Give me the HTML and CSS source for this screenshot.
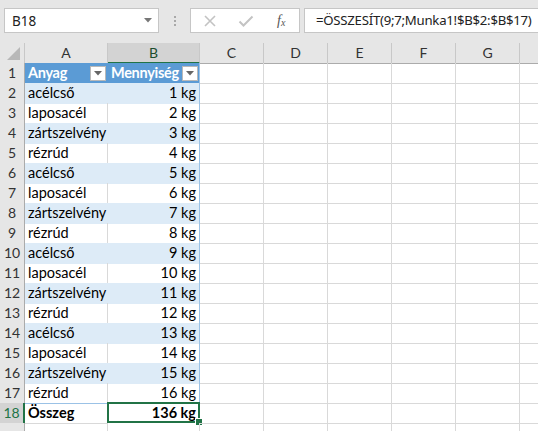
FILE: index.html
```html
<!DOCTYPE html>
<html lang="hu">
<head>
<meta charset="utf-8">
<title>Munka1</title>
<link rel="stylesheet" href="styles.css">
</head>
<body>
<div class="toolbar">
  <div class="namebox">
    <span class="nb-text">B18</span>
    <svg class="nb-arrow" width="8" height="5" viewBox="0 0 8 5"><path d="M0 0H8L4 4.5Z" fill="#777"/></svg>
  </div>
  <div class="dots"><i></i><i></i><i></i></div>
  <div class="fbtns">
    <svg class="ic" width="14" height="14" viewBox="0 0 14 14"><path d="M2 2L12 12M12 2L2 12" stroke="#c3c3c3" stroke-width="1.6" fill="none"/></svg>
    <svg class="ic" width="16" height="14" viewBox="0 0 16 14"><path d="M1.5 7.5L5.5 11.5L14.5 2.5" stroke="#c3c3c3" stroke-width="2" fill="none"/></svg>
    <span class="fx">f<sub>x</sub></span>
  </div>
  <div class="formula">=ÖSSZESÍT(9;7;Munka1!$B$2:$B$17)</div>
</div>

<div class="sheet">
  <div class="row hdr">
    <div class="corner"><svg width="13" height="13" viewBox="0 0 13 13"><path d="M13 0V13H0Z" fill="#b8b8b8"/></svg></div>
    <div class="ch">A</div><div class="ch sel">B</div><div class="ch">C</div><div class="ch">D</div><div class="ch">E</div><div class="ch">F</div><div class="ch">G</div><div class="ch">H</div>
  </div>

  <div class="row">
    <div class="rh">1</div>
    <div class="c th"><span>Anyag</span><span class="fb"><svg width="8" height="5" viewBox="0 0 8 5"><path d="M0 0H8L4 4.5Z" fill="#666"/></svg></span></div>
    <div class="c th tb"><span>Mennyiség</span><span class="fb"><svg width="8" height="5" viewBox="0 0 8 5"><path d="M0 0H8L4 4.5Z" fill="#666"/></svg></span></div>
    <div class="c"></div><div class="c"></div><div class="c"></div><div class="c"></div><div class="c"></div><div class="c"></div>
  </div>

  <div class="row band"><div class="rh">2</div><div class="c ta">acélcső</div><div class="c tb num">1 kg</div><div class="c"></div><div class="c"></div><div class="c"></div><div class="c"></div><div class="c"></div><div class="c"></div></div>
  <div class="row"><div class="rh">3</div><div class="c ta">laposacél</div><div class="c tb num">2 kg</div><div class="c"></div><div class="c"></div><div class="c"></div><div class="c"></div><div class="c"></div><div class="c"></div></div>
  <div class="row band"><div class="rh">4</div><div class="c ta">zártszelvény</div><div class="c tb num">3 kg</div><div class="c"></div><div class="c"></div><div class="c"></div><div class="c"></div><div class="c"></div><div class="c"></div></div>
  <div class="row"><div class="rh">5</div><div class="c ta">rézrúd</div><div class="c tb num">4 kg</div><div class="c"></div><div class="c"></div><div class="c"></div><div class="c"></div><div class="c"></div><div class="c"></div></div>
  <div class="row band"><div class="rh">6</div><div class="c ta">acélcső</div><div class="c tb num">5 kg</div><div class="c"></div><div class="c"></div><div class="c"></div><div class="c"></div><div class="c"></div><div class="c"></div></div>
  <div class="row"><div class="rh">7</div><div class="c ta">laposacél</div><div class="c tb num">6 kg</div><div class="c"></div><div class="c"></div><div class="c"></div><div class="c"></div><div class="c"></div><div class="c"></div></div>
  <div class="row band"><div class="rh">8</div><div class="c ta">zártszelvény</div><div class="c tb num">7 kg</div><div class="c"></div><div class="c"></div><div class="c"></div><div class="c"></div><div class="c"></div><div class="c"></div></div>
  <div class="row"><div class="rh">9</div><div class="c ta">rézrúd</div><div class="c tb num">8 kg</div><div class="c"></div><div class="c"></div><div class="c"></div><div class="c"></div><div class="c"></div><div class="c"></div></div>
  <div class="row band"><div class="rh">10</div><div class="c ta">acélcső</div><div class="c tb num">9 kg</div><div class="c"></div><div class="c"></div><div class="c"></div><div class="c"></div><div class="c"></div><div class="c"></div></div>
  <div class="row"><div class="rh">11</div><div class="c ta">laposacél</div><div class="c tb num">10 kg</div><div class="c"></div><div class="c"></div><div class="c"></div><div class="c"></div><div class="c"></div><div class="c"></div></div>
  <div class="row band"><div class="rh">12</div><div class="c ta">zártszelvény</div><div class="c tb num">11 kg</div><div class="c"></div><div class="c"></div><div class="c"></div><div class="c"></div><div class="c"></div><div class="c"></div></div>
  <div class="row"><div class="rh">13</div><div class="c ta">rézrúd</div><div class="c tb num">12 kg</div><div class="c"></div><div class="c"></div><div class="c"></div><div class="c"></div><div class="c"></div><div class="c"></div></div>
  <div class="row band"><div class="rh">14</div><div class="c ta">acélcső</div><div class="c tb num">13 kg</div><div class="c"></div><div class="c"></div><div class="c"></div><div class="c"></div><div class="c"></div><div class="c"></div></div>
  <div class="row"><div class="rh">15</div><div class="c ta">laposacél</div><div class="c tb num">14 kg</div><div class="c"></div><div class="c"></div><div class="c"></div><div class="c"></div><div class="c"></div><div class="c"></div></div>
  <div class="row band"><div class="rh">16</div><div class="c ta">zártszelvény</div><div class="c tb num">15 kg</div><div class="c"></div><div class="c"></div><div class="c"></div><div class="c"></div><div class="c"></div><div class="c"></div></div>
  <div class="row last"><div class="rh">17</div><div class="c ta">rézrúd</div><div class="c tb num">16 kg</div><div class="c"></div><div class="c"></div><div class="c"></div><div class="c"></div><div class="c"></div><div class="c"></div></div>
  <div class="row total"><div class="rh selr">18</div><div class="c ta">Összeg</div><div class="c tb num active">136 kg<span class="handle"></span></div><div class="c"></div><div class="c"></div><div class="c"></div><div class="c"></div><div class="c"></div><div class="c"></div></div>
  <div class="row"><div class="rh"></div><div class="c"></div><div class="c"></div><div class="c"></div><div class="c"></div><div class="c"></div><div class="c"></div><div class="c"></div><div class="c"></div></div>
</div>
</body>
</html>
```

FILE: styles.css
```css
html, body {
  margin: 0;
  padding: 0;
  background: #ffffff;
  overflow: hidden;
  width: 538px;
  height: 431px;
}

.toolbar {
  height: 43px;
  background: #e6e6e6;
  display: flex;
  align-items: flex-start;
  padding-top: 8px;
  box-sizing: border-box;
  font-family: "Noto Sans", "Open Sans", sans-serif;
}

.namebox {
  margin-left: 4px;
  width: 155px;
  height: 25px;
  box-sizing: border-box;
  background: #fff;
  border: 1px solid #c6c6c6;
  display: flex;
  align-items: center;
  padding: 0 6px 0 7px;
}
.nb-text {
  font-size: 13.5px;
  color: #222;
  flex: 1;
}
.nb-arrow { display: block; }

.dots {
  width: 31px;
  height: 25px;
  display: flex;
  flex-direction: column;
  align-items: center;
  justify-content: center;
  gap: 2px;
}
.dots i {
  width: 2px;
  height: 2px;
  background: #a8a8a8;
  display: block;
}

.fbtns {
  width: 110px;
  height: 25px;
  box-sizing: border-box;
  background: #fff;
  border: 1px solid #c6c6c6;
  display: flex;
  align-items: center;
  padding-left: 12px;
  gap: 21px;
}
.ic { display: block; }
.fx {
  font-family: "Liberation Serif", "DejaVu Serif", serif;
  font-style: italic;
  font-size: 14px;
  color: #555;
  margin-left: 2px;
  line-height: 1;
}
.fx sub {
  font-size: 10px;
  vertical-align: -1px;
}

.formula {
  margin-left: 4px;
  flex: 1;
  height: 25px;
  box-sizing: border-box;
  background: #fff;
  border: 1px solid #c6c6c6;
  border-right: none;
  font-size: 13.2px;
  color: #222;
  line-height: 23px;
  padding-left: 11px;
  white-space: nowrap;
  overflow: hidden;
  letter-spacing: -0.25px;
}

.sheet {
  font-family: "Lato", "Liberation Sans", sans-serif;
  font-size: 14.5px;
  color: #000;
}

.row {
  display: grid;
  grid-template-columns: 25px 83px 92px repeat(6, 64px);
  height: 20px;
}

.hdr { background: #e6e6e6; }

.corner {
  box-sizing: border-box;
  border-right: 1px solid #c8c8c8;
  border-bottom: 1px solid #ababab;
  display: flex;
  align-items: flex-end;
  justify-content: flex-end;
  padding: 0 4px 3px 0;
}
.corner svg { display: block; }

.ch {
  box-sizing: border-box;
  border-right: 1px solid #c8c8c8;
  border-bottom: 1px solid #ababab;
  text-align: center;
  line-height: 20px;
  color: #333;
  font-size: 14px;
}
.ch.sel {
  background: #d3d3d3;
  border-bottom: 2px solid #217346;
  color: #1b4d2e;
  line-height: 19px;
}

.rh {
  background: #e6e6e6;
  box-sizing: border-box;
  border-right: 1px solid #ababab;
  border-bottom: 1px solid #c8c8c8;
  text-align: center;
  line-height: 20px;
  color: #333;
  font-size: 14px;
}
.rh.selr {
  background: #d3d3d3;
  border-right: 2px solid #217346;
  color: #217346;
}

.c {
  box-sizing: border-box;
  border-right: 1px solid #d9d9d9;
  border-bottom: 1px solid #d9d9d9;
  line-height: 20px;
  padding: 0 3px;
  white-space: nowrap;
  position: relative;
}

.th {
  background: #5b9bd5;
  color: #fff;
  font-weight: bold;
  border-color: #5b9bd5;
  display: flex;
  align-items: center;
  justify-content: space-between;
  padding-right: 1px;
  letter-spacing: -0.3px;
}
.th.tb { border-right-color: #9bc2e6; }

.fb {
  width: 16px;
  height: 15px;
  box-sizing: border-box;
  background: #fff;
  border: 1px solid #b9b9b9;
  display: flex;
  align-items: center;
  justify-content: center;
}
.fb svg { display: block; }

.num { text-align: right; }
.tb { border-right-color: #9bc2e6; }

.band .ta, .band .tb {
  background: #ddebf7;
  border-bottom-color: #ddebf7;
}
.band .ta { border-right-color: #ddebf7; }
.band .tb { border-right-color: #9bc2e6; }

.last .ta, .last .tb {
  border-bottom-color: #9bc2e6;
}

.total .ta, .total .tb {
  font-weight: bold;
}

.active {
  border: 2px solid #217346;
  line-height: 17px;
  margin-left: -1px;
  margin-top: -1px;
  height: 21px;
  padding-right: 2px;
}
.handle {
  position: absolute;
  right: -5px;
  bottom: -5px;
  width: 6px;
  height: 6px;
  background: #217346;
  border: 1px solid #fff;
}
```
